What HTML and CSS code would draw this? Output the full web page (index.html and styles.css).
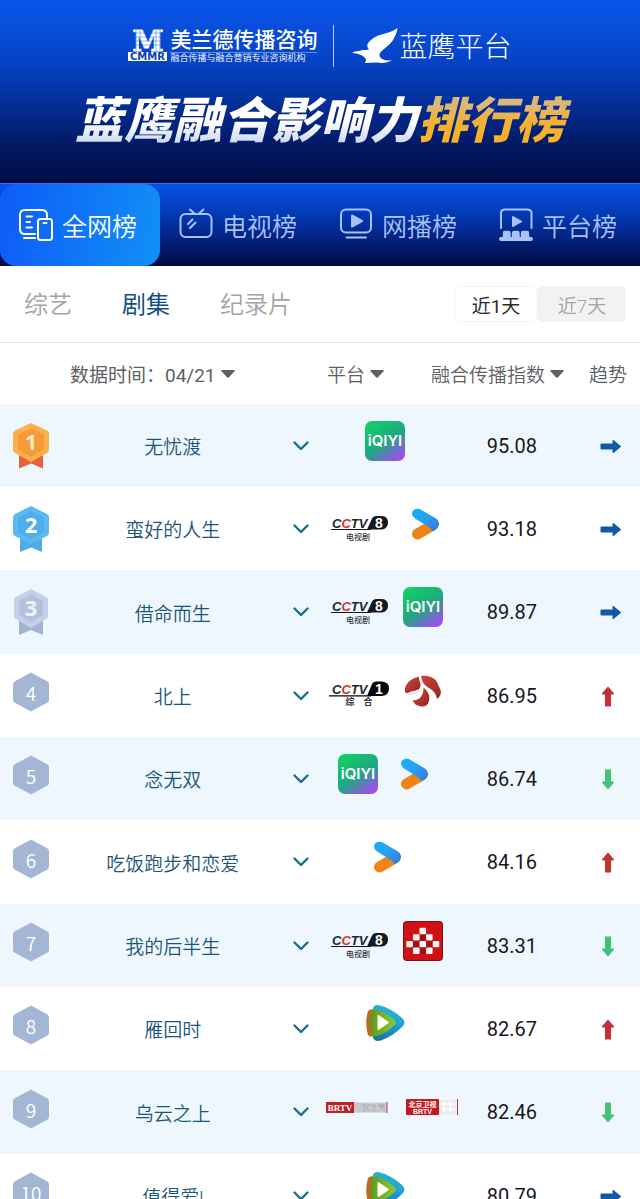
FILE: index.html
```html
<!DOCTYPE html>
<html lang="zh-CN">
<head>
    <meta charset="UTF-8">
    <meta name="viewport" content="width=device-width, initial-scale=1.0">
    <title>蓝鹰融合影响力排行榜</title>
    <link rel="stylesheet" href="styles.css">
</head>
<body>
    <!-- Shared icons -->
    <svg class="sprite" width="0" height="0" aria-hidden="true">
        <defs>
            <linearGradient id="iqiyiBg" x1="0.2" y1="0" x2="0.9" y2="1">
                <stop offset="0" stop-color="#12cf62"/>
                <stop offset="0.5" stop-color="#1fa880"/>
                <stop offset="0.75" stop-color="#6a72c4"/>
                <stop offset="1" stop-color="#b044f0"/>
            </linearGradient>
            <linearGradient id="miguBlue" x1="0" y1="0" x2="1" y2="1">
                <stop offset="0" stop-color="#12b0fa"/>
                <stop offset="0.5" stop-color="#26a0f2"/>
                <stop offset="1" stop-color="#3f6fd6"/>
            </linearGradient>
            <linearGradient id="jsRed" x1="0" y1="0" x2="1" y2="1">
                <stop offset="0" stop-color="#d0463c"/>
                <stop offset="1" stop-color="#92261f"/>
            </linearGradient>
            <linearGradient id="txBlue" x1="0" y1="0" x2="0" y2="1">
                <stop offset="0" stop-color="#27b3c4"/>
                <stop offset="0.5" stop-color="#22a5d8"/>
                <stop offset="1" stop-color="#19709c"/>
            </linearGradient>
            <linearGradient id="txGreen" x1="0" y1="0" x2="1" y2="0">
                <stop offset="0" stop-color="#5d9a1c"/>
                <stop offset="1" stop-color="#8cc83a"/>
            </linearGradient>
            <symbol id="hex" viewBox="0 0 36 40">
                <path d="M18 0.500 L34.500 9.500 Q36 10.500 36 12 V28 Q36 29.500 34.500 30.500 L18 39.500 L1.500 30.500 Q0 29.500 0 28 V12 Q0 10.500 1.500 9.500 Z" fill="#a3b7d5"/>
            </symbol>
            <symbol id="chevron" viewBox="0 0 16 10">
                <path d="M1.500 1.500 L8 8 L14.500 1.500" fill="none" stroke="#17708a" stroke-width="2.400" stroke-linecap="round" stroke-linejoin="round"/>
            </symbol>
            <symbol id="caret" viewBox="0 0 14 8">
                <path d="M1 0 H13 Q14 0.300 13.500 1.200 L8 7.300 Q7 8 6 7.300 L0.500 1.200 Q0 0.300 1 0 Z" fill="#5c5f63"/>
            </symbol>
            <symbol id="iqiyi" viewBox="0 0 40 40">
                <rect width="40" height="40" rx="7" fill="url(#iqiyiBg)"/>
                <text x="20" y="25" class="iqiyi-text">iQIYI</text>
            </symbol>
            <symbol id="cctv8" viewBox="0 0 62 40">
                <text x="5" y="23.500" class="cctv-text">C<tspan fill="#d8322a">C</tspan>TV</text>
                <path d="M40 25.500 L45 14.500 Q46 12 49 12 H55 Q61 12.500 61 18.500 T55 25.500 Z" fill="#15181c"/>
                <path d="M4 25.500 H44" stroke="#15181c" stroke-width="1"/>
                <text x="52" y="23.500" class="cctv-num">8</text>
                <text x="31" y="36" class="cctv-sub">电视剧</text>
            </symbol>
            <symbol id="cctv1" viewBox="0 0 62 40">
                <text x="5" y="22.500" class="cctv-text">C<tspan fill="#d8322a">C</tspan>TV</text>
                <path d="M40 25 L45 13 Q46 10.500 49 10.500 H55 Q62 11 62 17.500 T55 25 Z" fill="#050607"/>
                <path d="M2 24.800 H44" stroke="#050607" stroke-width="1.300"/>
                <text x="52" y="22.500" class="cctv-num">1</text>
                <text x="32" y="34" class="cctv-sub bold">综　合</text>
            </symbol>
            <symbol id="migu" viewBox="0 0 40 40">
                <path d="M14.500 30 L29 21.500" stroke="#ef8416" stroke-width="11" stroke-linecap="round"/>
                <path d="M12 5.200 Q15.500 4.200 18.500 6 L33 14.500 Q36.500 17 36 21 Q35.500 24 32 26 L29.500 27.300 Q28 24 21 20 L12 14.500 Q9 12.500 9 10 Q9 6.500 12 5.200 Z" fill="url(#miguBlue)"/>
            </symbol>
            <symbol id="jstv" viewBox="0 0 40 40">
                <path d="M1.800 19.500 C2 13 8 7 16 5.800 C15.500 10 19.500 14 16.500 17.500 C14 20.500 8 19.500 5 22 C3 22.500 2 21.500 1.800 19.500 Z" fill="url(#jsRed)"/>
                <path d="M18 5 C25 4 32 7 34 11 L37.700 19.500 C38.500 23 37 26 34 28 C33.500 23 30 19.500 26 17 C21 14 19 11 18 5 Z" fill="url(#jsRed)"/>
                <path d="M9.500 29.500 C17 29 20.500 25 20.500 16.500 C25 20 27.500 25 26 30 C25 34 22 36 18.500 35.500 C14 35 11 33 9.500 29.500 Z" fill="url(#jsRed)"/>
                <path d="M6 23.500 Q15 23 19 17" fill="none" stroke="#edc7ae" stroke-width="0.800"/>
            </symbol>
            <symbol id="redmosaic" viewBox="0 0 40 40">
                <rect width="40" height="40" rx="4" fill="#7d1013"/>
                <rect x="1" y="1" width="38" height="38" rx="3" fill="#cf1014"/>
                <path d="M10 20h7v-7h6v7h7v7h-7v6h-6v-6h-7z" fill="#a50f12"/>
                <g fill="#fff5f3">
                    <rect x="16.500" y="6.700" width="6.600" height="6.600" rx="1"/>
                    <rect x="10" y="13.300" width="6.600" height="6.300" rx="1"/>
                    <rect x="23" y="13.300" width="6.600" height="6.300" rx="1"/>
                    <rect x="3.300" y="20" width="6.600" height="6.300" rx="1"/>
                    <rect x="16.500" y="20" width="6.600" height="6.300" rx="1"/>
                    <rect x="29.700" y="20" width="6.600" height="6.300" rx="1"/>
                    <rect x="10" y="26.600" width="6.600" height="6.300" rx="1"/>
                    <rect x="23" y="26.600" width="6.600" height="6.300" rx="1"/>
                </g>
            </symbol>
            <symbol id="tencent" viewBox="0 0 40 40">
                <path d="M8 4 Q9 0.500 14 1.200 Q26 4 37 14 Q42 18.500 37 23 Q28 32 16 36.500 Q10 38 8 34 Z" fill="url(#txBlue)"/>
                <path d="M3 7 Q5 4.500 9 5.500 V32 Q5 33.500 3 31 Q-0.500 19 3 7 Z" fill="#bd6a22"/>
                <path d="M6.500 8 Q8 4.500 12 6 Q22 9 29.500 16 Q32 18.500 29.500 21 Q22 28.500 12 32 Q7.500 33 6.500 30 Q4 19 6.500 8 Z" fill="url(#txGreen)"/>
                <path d="M12.500 12 Q12.500 10.500 14 11.300 L23 17.500 Q24 18.500 23 19.500 L14 25.800 Q12.500 26.500 12.500 25 Z" fill="#fffff2"/>
            </symbol>
            <symbol id="brtv" viewBox="0 0 62 40">
                <rect x="0" y="15" width="28" height="11" fill="#bd1f27"/>
                <rect x="28" y="15.500" width="33" height="10" fill="#cfccd3"/>
                <path d="M61 15 V26" stroke="#a3444c" stroke-width="1"/>
                <text x="14" y="24" class="brtv-text">BRTV</text>
                <text x="44" y="24" class="brtv-side">北京时间</text>
            </symbol>
            <symbol id="bjtv" viewBox="0 0 62 40">
                <rect x="4" y="12" width="33" height="16" rx="1" fill="#c11a22"/>
                <rect x="37" y="13" width="17" height="14" fill="#ece9ec"/>
                <path d="M38 17 h15 M38 22 h15 M42 14 v12 M48 14 v12" stroke="#fff" stroke-width="1.500"/>
                <path d="M55.500 12 V28" stroke="#a8323c" stroke-width="1"/>
                <text x="20.500" y="19.500" class="bjtv-cn">北京卫视</text>
                <text x="20.500" y="26.800" class="bjtv-en">BRTV</text>
            </symbol>
            <symbol id="right" viewBox="0 0 28 28">
                <path d="M7 11.500 H18.500 V8.600 Q18.800 7.600 19.800 8.300 L26.700 14 Q27.200 14.500 26.700 15 L19.800 20.700 Q18.800 21.400 18.500 20.400 V17.500 H7.500 Q6.500 17.500 6.500 16.500 V12.500 Q6.500 11.500 7.500 11.500 Z" fill="#0f59a6"/>
            </symbol>
            <symbol id="up" viewBox="0 0 28 28">
                <path d="M11 24.500 V12.500 H8.500 Q7.500 12.300 8.100 11.300 L13.500 5 Q14 4.500 14.500 5 L19.900 11.300 Q20.500 12.300 19.500 12.500 H17 V24.500 Z" fill="#bf3430"/>
            </symbol>
            <symbol id="down" viewBox="0 0 28 28">
                <path d="M11 4.500 V16.500 H8.500 Q7.500 16.700 8.100 17.700 L13.500 24 Q14 24.500 14.500 24 L19.900 17.700 Q20.500 16.700 19.500 16.500 H17 V4.500 Z" fill="#42c277"/>
            </symbol>
        </defs>
    </svg>

    <div class="app">
        <header class="banner">
            <div class="brands">
                <div class="cmmr">
                    <svg width="40" height="34" viewBox="0 0 40 34" aria-hidden="true">
                        <text x="20" y="21.500" class="cmmr-m">M</text>
                        <path d="M2 4H38 M2 8H38 M2 12H38 M2 16H38 M8 0V22 M12 0V22 M28 0V22 M32 0V22" stroke="#0746cb" stroke-width="0.400"/>
                        <rect x="0" y="23" width="39" height="9" fill="#fff"/>
                        <text x="19.500" y="31" class="cmmr-box">CMMR</text>
                    </svg>
                    <div class="cmmr-words">
                        <div class="cmmr-name">美兰德传播咨询</div>
                        <div class="cmmr-slogan">融合传播与融合营销专业咨询机构</div>
                    </div>
                </div>
                <div class="eagle">
                    <svg width="46" height="36" viewBox="0 0 46 36" aria-hidden="true">
                        <path d="M0 25 C3 23 6 23.200 9 22.500 C11.500 21.300 14 22.500 17 21.500 C15 19 14.500 17 16.500 14.500 C20 10 26 7 33 5.500 C38 4.500 42 2.500 45.500 0 C45 5 43 8.500 41 12 C38.500 16 35 18.500 32 21 C28.500 24 26.500 26 28 29 C30 32 35 33 40 32 C36 35 30 35.500 25 34.500 L12.500 35 C14 33.500 14.500 32 13.500 30.500 C11 27 6 25.500 0 25 Z" fill="#fff"/>
                    </svg>
                    <span>蓝鹰平台</span>
                </div>
            </div>
            <h1><span class="silver">蓝鹰融合影响力</span><span class="gold">排行榜</span></h1>
        </header>

        <nav class="tabs">
            <button class="tab active">
                <svg width="36" height="36" viewBox="0 0 36 36" fill="none" stroke="currentColor" stroke-width="2" stroke-linecap="round" stroke-linejoin="round">
                    <path d="M17 27 H7 Q2 27 2 22 V8 Q2 3 7 3 H24 Q29 3 29 8 V10"/>
                    <path d="M8.500 9.500 H14 M8.500 15 H12 M8.500 20.500 H14 M6 31 H17"/>
                    <rect x="20" y="12" width="14" height="21" rx="2.500"/>
                    <path d="M25.500 16 H28.500"/>
                </svg>
                全网榜
            </button>
            <button class="tab">
                <svg width="36" height="36" viewBox="0 0 36 36" fill="none" stroke="currentColor" stroke-width="2" stroke-linecap="round" stroke-linejoin="round">
                    <rect x="2.500" y="7" width="31" height="23" rx="5"/>
                    <path d="M12 2.500 L17 7 M25.500 2.500 L20.500 7 M10 17 L14.500 12.500 M12 21 L17.500 15.500"/>
                </svg>
                电视榜
            </button>
            <button class="tab">
                <svg width="36" height="36" viewBox="0 0 36 36" fill="none" stroke="currentColor" stroke-width="2" stroke-linecap="round" stroke-linejoin="round">
                    <rect x="3" y="2.500" width="30" height="23" rx="5"/>
                    <path d="M8.500 30.500 H28"/>
                    <path d="M14 8.500 L24 14 L14 19.500 Z" fill="currentColor"/>
                </svg>
                网播榜
            </button>
            <button class="tab">
                <svg width="36" height="36" viewBox="0 0 36 36" fill="none" stroke="currentColor" stroke-width="2" stroke-linecap="round" stroke-linejoin="round">
                    <path d="M3 21 V6 Q3 2.500 7 2.500 H29 Q33.500 2.500 33.500 6 V21"/>
                    <path d="M15 10 L23 14.500 L15 19 Z" fill="currentColor"/>
                    <path d="M6 30 V26 Q6 25 7 25 H10.500 Q11.500 25 11.500 26 V30 M15 30 V26 Q15 25 16 25 H19.500 Q20.500 25 20.500 26 V30 M24 30 V26 Q24 25 25 25 H29 Q30 25 30 26 V30" fill="currentColor" stroke-width="2.400"/>
                    <path d="M3 32 H33" stroke-width="4"/>
                </svg>
                平台榜
            </button>
        </nav>

        <div class="filters">
            <div class="genres">
                <button class="genre">综艺</button>
                <button class="genre active">剧集</button>
                <button class="genre">纪录片</button>
            </div>
            <div class="days">
                <button class="day active">近1天</button>
                <button class="day">近7天</button>
            </div>
        </div>

        <table class="ranking">
            <colgroup>
                <col class="col-rank">
                <col class="col-name">
                <col class="col-more">
                <col class="col-platform">
                <col class="col-index">
                <col class="col-trend">
            </colgroup>
            <thead>
                <tr>
                    <th colspan="3" class="h-date"><button class="sort">数据时间：04/21<svg width="14" height="8"><use href="#caret"/></svg></button></th>
                    <th class="h-platform"><button class="sort">平台<svg width="14" height="8"><use href="#caret"/></svg></button></th>
                    <th class="h-index"><button class="sort">融合传播指数<svg width="14" height="8"><use href="#caret"/></svg></button></th>
                    <th>趋势</th>
                </tr>
            </thead>
            <tbody>
                <tr>
                    <td>
                        <svg class="medal" width="38" height="48" viewBox="0 0 38 48">
                            <path d="M7 32 H31 V46.500 L19 41.500 L7 46.500 Z" fill="#e8613c"/>
                            <path d="M19 1 L35 8.500 Q37 9.500 37 11.500 V28 Q37 30 35 31 L19 40 L3 31 Q1 30 1 28 V11.500 Q1 9.500 3 8.500 Z" fill="#fbb04c"/>
                            <path d="M19 6 L32 12.500 V27.500 L19 35 L6 27.500 V12.500 Z" fill="#f59b38"/>
                            <text x="19" y="28" class="medal-num" fill="#ffe9c8">1</text>
                        </svg>
                    </td>
                    <td class="name">无忧渡</td>
                    <td><button class="more" aria-label="展开"><svg width="16" height="10"><use href="#chevron"/></svg></button></td>
                    <td><div class="logos"><svg width="40" height="40"><use href="#iqiyi"/></svg></div></td>
                    <td class="value">95.08</td>
                    <td><svg class="trend" width="28" height="28"><use href="#right"/></svg></td>
                </tr>
                <tr>
                    <td>
                        <svg class="medal" width="38" height="48" viewBox="0 0 38 48">
                            <path d="M8 30 H30 V47 L19 42.500 L8 47 Z" fill="#4dabe6"/>
                            <path d="M19 1 L35 9 Q37 10 37 12 V28 Q37 30 35 31 L19 39 L3 31 Q1 30 1 28 V12 Q1 10 3 9 Z" fill="#5bb9f2"/>
                            <path d="M19 6 L32 13 V27 L19 34 L6 27 V13 Z" fill="#4faeea"/>
                            <text x="19" y="28" class="medal-num" fill="#fff">2</text>
                        </svg>
                    </td>
                    <td class="name">蛮好的人生</td>
                    <td><button class="more" aria-label="展开"><svg width="16" height="10"><use href="#chevron"/></svg></button></td>
                    <td><div class="logos"><svg width="62" height="40"><use href="#cctv8"/></svg><svg width="40" height="40"><use href="#migu"/></svg></div></td>
                    <td class="value">93.18</td>
                    <td><svg class="trend" width="28" height="28"><use href="#right"/></svg></td>
                </tr>
                <tr>
                    <td>
                        <svg class="medal" width="38" height="48" viewBox="0 0 38 48">
                            <path d="M7 33 H31 V47 L19 42 L7 47 Z" fill="#a3b3cf"/>
                            <path d="M19 1 L34 9 Q36 10 36 12 V28 Q36 30 34 31 L19 40 L4 31 Q2 30 2 28 V12 Q2 10 4 9 Z" fill="#c4cfe8"/>
                            <path d="M19 6 L31 13 V27 L19 34.500 L7 27 V13 Z" fill="#b4c0de"/>
                            <text x="19" y="28" class="medal-num" fill="#eef4ff">3</text>
                        </svg>
                    </td>
                    <td class="name">借命而生</td>
                    <td><button class="more" aria-label="展开"><svg width="16" height="10"><use href="#chevron"/></svg></button></td>
                    <td><div class="logos"><svg width="62" height="40"><use href="#cctv8"/></svg><svg width="40" height="40"><use href="#iqiyi"/></svg></div></td>
                    <td class="value">89.87</td>
                    <td><svg class="trend" width="28" height="28"><use href="#right"/></svg></td>
                </tr>
                <tr>
                    <td><svg class="rank" width="36" height="40"><use href="#hex"/><text x="18" y="29" class="rank-num">4</text></svg></td>
                    <td class="name">北上</td>
                    <td><button class="more" aria-label="展开"><svg width="16" height="10"><use href="#chevron"/></svg></button></td>
                    <td><div class="logos"><svg width="62" height="40"><use href="#cctv1"/></svg><svg width="40" height="40"><use href="#jstv"/></svg></div></td>
                    <td class="value">86.95</td>
                    <td><svg class="trend" width="28" height="28"><use href="#up"/></svg></td>
                </tr>
                <tr>
                    <td><svg class="rank" width="36" height="40"><use href="#hex"/><text x="18" y="29" class="rank-num">5</text></svg></td>
                    <td class="name">念无双</td>
                    <td><button class="more" aria-label="展开"><svg width="16" height="10"><use href="#chevron"/></svg></button></td>
                    <td><div class="logos"><svg width="40" height="40"><use href="#iqiyi"/></svg><svg width="40" height="40"><use href="#migu"/></svg></div></td>
                    <td class="value">86.74</td>
                    <td><svg class="trend" width="28" height="28"><use href="#down"/></svg></td>
                </tr>
                <tr>
                    <td><svg class="rank" width="36" height="40"><use href="#hex"/><text x="18" y="29" class="rank-num">6</text></svg></td>
                    <td class="name">吃饭跑步和恋爱</td>
                    <td><button class="more" aria-label="展开"><svg width="16" height="10"><use href="#chevron"/></svg></button></td>
                    <td><div class="logos"><svg width="40" height="40"><use href="#migu"/></svg></div></td>
                    <td class="value">84.16</td>
                    <td><svg class="trend" width="28" height="28"><use href="#up"/></svg></td>
                </tr>
                <tr>
                    <td><svg class="rank" width="36" height="40"><use href="#hex"/><text x="18" y="29" class="rank-num">7</text></svg></td>
                    <td class="name">我的后半生</td>
                    <td><button class="more" aria-label="展开"><svg width="16" height="10"><use href="#chevron"/></svg></button></td>
                    <td><div class="logos"><svg width="62" height="40"><use href="#cctv8"/></svg><svg width="40" height="40"><use href="#redmosaic"/></svg></div></td>
                    <td class="value">83.31</td>
                    <td><svg class="trend" width="28" height="28"><use href="#down"/></svg></td>
                </tr>
                <tr>
                    <td><svg class="rank" width="36" height="40"><use href="#hex"/><text x="18" y="29" class="rank-num">8</text></svg></td>
                    <td class="name">雁回时</td>
                    <td><button class="more" aria-label="展开"><svg width="16" height="10"><use href="#chevron"/></svg></button></td>
                    <td><div class="logos"><svg width="40" height="40"><use href="#tencent"/></svg></div></td>
                    <td class="value">82.67</td>
                    <td><svg class="trend" width="28" height="28"><use href="#up"/></svg></td>
                </tr>
                <tr>
                    <td><svg class="rank" width="36" height="40"><use href="#hex"/><text x="18" y="29" class="rank-num">9</text></svg></td>
                    <td class="name">乌云之上</td>
                    <td><button class="more" aria-label="展开"><svg width="16" height="10"><use href="#chevron"/></svg></button></td>
                    <td><div class="logos"><svg width="62" height="40"><use href="#brtv"/></svg><svg width="62" height="40"><use href="#bjtv"/></svg></div></td>
                    <td class="value">82.46</td>
                    <td><svg class="trend" width="28" height="28"><use href="#down"/></svg></td>
                </tr>
                <tr>
                    <td><svg class="rank" width="36" height="40"><use href="#hex"/><text x="18" y="29" class="rank-num">10</text></svg></td>
                    <td class="name">值得爱!</td>
                    <td><button class="more" aria-label="展开"><svg width="16" height="10"><use href="#chevron"/></svg></button></td>
                    <td><div class="logos"><svg width="40" height="40"><use href="#tencent"/></svg></div></td>
                    <td class="value">80.79</td>
                    <td><svg class="trend" width="28" height="28"><use href="#right"/></svg></td>
                </tr>
            </tbody>
        </table>
    </div>
</body>
</html>
```
FILE: styles.css
```css
:root {
    --navy: #020b45;
    --blue: #0752e6;
    --name: #1c5578;
    --grey: #5c5f63;
    --muted: #a2a4a6;
    --stripe: #eff7fe;
    --line: #e4e6ec;
}

* {
    margin: 0;
    padding: 0;
    box-sizing: border-box;
}

body {
    background: #fff;
    color: var(--grey);
    font-family: Roboto, "Noto Sans CJK SC", sans-serif;
    font-weight: 350;
}

button {
    border: none;
    background: none;
    color: inherit;
    font: inherit;
    cursor: pointer;
}

svg {
    display: block;
    flex: none;
    overflow: visible;
}

.sprite {
    position: absolute;
}

.app {
    height: 100vh;
    overflow: hidden;
}

/* Banner */
.banner {
    padding: 25px 0 36px;
    background: linear-gradient(#0a55ea, #0644c6 33%, #04309a 55%, #021a68 78%, var(--navy));
    color: #fff;
}

.brands {
    display: flex;
    justify-content: center;
    height: 42px;
}

.cmmr {
    display: flex;
    align-items: center;
    gap: 2px;
    padding-right: 16px;
    border-right: 1px solid #b9cdf5;
}

.cmmr-name {
    font-size: 21px;
    font-weight: 500;
    line-height: 24px;
}

.cmmr-slogan {
    border-top: 1px solid #5f8cea;
    font-size: 9px;
    line-height: 11px;
    white-space: nowrap;
}

.cmmr-m {
    font: bold 28px "DejaVu Serif", serif;
    text-anchor: middle;
    fill: #fff;
    stroke: #fff;
    stroke-width: 1;
}

.cmmr-box {
    font: bold 10px "DejaVu Sans", sans-serif;
    text-anchor: middle;
    fill: #0a3fb5;
}

.eagle {
    display: flex;
    align-items: center;
    gap: 1px;
    padding-left: 18px;
    font-size: 28px;
    font-weight: 300;
}

.eagle span {
    padding-bottom: 3px;
}

.banner h1 {
    margin-top: 30px;
    font-size: 49px;
    font-style: italic;
    font-weight: 900;
    line-height: 50px;
    text-align: center;
    white-space: nowrap;
}

/* Extra room so the slanted last glyph keeps its gradient fill */
.silver,
.gold {
    padding-right: 10px;
    margin-right: -10px;
    background: linear-gradient(#fff 50%, #c9d6ee 90%);
    background-clip: text;
    -webkit-background-clip: text;
    color: transparent;
}

.gold {
    background-image: linear-gradient(#dcb878 20%, #f3b234 50%, #fbb021);
}

/* Main tabs */
.tabs {
    display: flex;
    border-top: 1px solid #3c6cd8;
    background: linear-gradient(var(--blue), #0438b0 40%, #021d74 72%, var(--navy));
}

.tab {
    flex: 1;
    display: flex;
    align-items: center;
    gap: 8px;
    height: 82px;
    padding: 0 0 0 18px;
    border-radius: 16px;
    color: #a9c2f8;
    font-size: 25px;
    white-space: nowrap;
}

.tab.active {
    background: linear-gradient(100deg, #0d5bf8, #1190f6);
    color: #fff;
}

/* Genre and period filters */
.filters {
    display: flex;
    align-items: center;
    justify-content: space-between;
    height: 77px;
    padding: 0 14px 0 24px;
    border-bottom: 1px solid var(--line);
}

.genres {
    display: flex;
    gap: 50px;
    padding-bottom: 4px;
}

.genre {
    color: var(--muted);
    font-size: 24px;
}

.genre.active {
    color: #14507f;
    font-weight: 400;
}

.days {
    display: flex;
}

.day {
    width: 88px;
    height: 36px;
    border-radius: 5px;
    background: #f2f2f3;
    color: var(--muted);
    font-size: 19px;
}

.day.active {
    width: 84px;
    border: 1px solid #f3f3f4;
    background: #fff;
    color: #2a2b2d;
    font-weight: 400;
}

/* Ranking table */
.ranking {
    width: 100%;
    table-layout: fixed;
    border-collapse: collapse;
    font-size: 19px;
}

.col-rank {
    width: 10%;
}

.col-name {
    width: 34%;
}

.col-more {
    width: 6%;
}

.col-platform {
    width: 20%;
}

.col-index {
    width: 20%;
}

.col-trend {
    width: 10%;
}

.ranking th {
    height: 61px;
    font-weight: inherit;
    white-space: nowrap;
}

.ranking tbody tr {
    height: 83px;
}

.ranking tbody tr:nth-child(3n) {
    height: 84px;
}

.ranking tbody tr:nth-child(odd) {
    background: var(--stripe);
}

.ranking td {
    text-align: center;
}

.sort {
    display: flex;
    align-items: center;
    gap: 5px;
}

.h-date {
    padding-left: 70px;
}

.h-date .sort {
    font-weight: 400;
}

.h-platform {
    padding-left: 7px;
}

.h-index {
    padding-right: 12px;
}

.h-index .sort {
    float: right;
}

.medal {
    margin-left: 12px;
}

.rank {
    margin: 0 0 7px 13px;
}

.rank-num {
    font: 350 19px "Noto Sans CJK SC", sans-serif;
    text-anchor: middle;
    fill: #fff;
}

.medal-num {
    font: bold 22px "Noto Sans", sans-serif;
    text-anchor: middle;
}

.ranking .name {
    color: var(--name);
}

.more {
    display: flex;
    align-items: center;
    justify-content: center;
    width: 100%;
    height: 36px;
}

.logos {
    display: flex;
    justify-content: safe center;
    gap: 14px;
    padding: 0 4px 10px 6px;
}

.ranking .value {
    color: #17181a;
    font-size: 20px;
    font-weight: 400;
}

.trend {
    margin: 0 auto;
}

/* Text inside the platform logos */
.iqiyi-text {
    font: 600 15px Inter, sans-serif;
    text-anchor: middle;
    fill: #fff;
}

.cctv-text {
    font: italic bold 13px "Liberation Sans", sans-serif;
    fill: #22262b;
}

.cctv-num {
    font: bold 14px "Liberation Sans", sans-serif;
    text-anchor: middle;
    fill: #fff;
}

.cctv-sub {
    font: 500 8px "Noto Sans CJK SC", sans-serif;
    text-anchor: middle;
    fill: #33373c;
}

.cctv-sub.bold {
    font-size: 9px;
    font-weight: 700;
}

.brtv-text {
    font: bold 9px "Liberation Serif", serif;
    text-anchor: middle;
    fill: #fff;
}

.brtv-side {
    font: 700 8px "Noto Sans CJK SC", sans-serif;
    text-anchor: middle;
    fill: #f6f5f7;
    stroke: #8d8a92;
    stroke-width: 0.3;
}

.bjtv-cn {
    font: 700 7px "Noto Sans CJK SC", sans-serif;
    text-anchor: middle;
    fill: #fff;
}

.bjtv-en {
    font: bold 7px "Liberation Sans", sans-serif;
    text-anchor: middle;
    fill: #fff;
}
```
